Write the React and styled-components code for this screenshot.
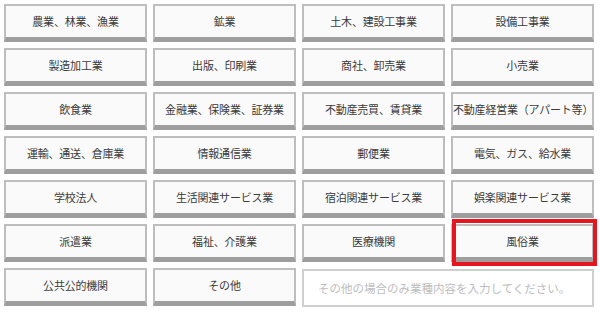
import React from 'react'
import styled, { createGlobalStyle } from 'styled-components'

const industries = [
    '農業、林業、漁業', '鉱業', '土木、建設工事業', '設備工事業',
    '製造加工業', '出版、印刷業', '商社、卸売業', '小売業',
    '飲食業', '金融業、保険業、証券業', '不動産売買、賃貸業', '不動産経営業（アパート等）',
    '運輸、通送、倉庫業', '情報通信業', '郵便業', '電気、ガス、給水業',
    '学校法人', '生活関連サービス業', '宿泊関連サービス業', '娯楽関連サービス業',
    '派遣業', '福祉、介護業', '医療機関', '風俗業',
    '公共公的機関', 'その他',
]

const GlobalStyle = createGlobalStyle`
    body {
        margin: 0;
        background: #ffffff;
        font-family: "Noto Sans CJK JP", "Noto Sans", sans-serif;
    }
`

function App() {
    const [selected, setSelected] = React.useState('風俗業')
    const [other, setOther] = React.useState('')

    return (
        <>
            <GlobalStyle />
            <Grid>
                {industries.map((name) => (
                    <Choice
                        key={name}
                        type="button"
                        $active={selected === name}
                        onClick={() => setSelected(name)}
                    >
                        {name}
                    </Choice>
                ))}
                <OtherInput
                    value={other}
                    onChange={(e) => setOther(e.target.value)}
                    placeholder="その他の場合のみ業種内容を入力してください。"
                />
            </Grid>
        </>
    )
}

export default App

const Grid = styled.div`
    display: grid;
    grid-template-columns: repeat(4, 143px);
    grid-auto-rows: 38px;
    gap: 6px;
    padding: 4px;
`
const Choice = styled.button`
    position: relative;
    box-sizing: border-box;
    margin: 0;
    padding: 0 0 1px;
    border: 2px solid #bebebe;
    border-bottom: 5px solid #9e9e9e;
    background: #fafafa;
    color: #3a3a3a;
    font-family: inherit;
    font-size: 11px;
    letter-spacing: -0.2px;
    white-space: nowrap;
    overflow: visible;
    cursor: pointer;
    &::after {
        content: '';
        display: ${(p) => (p.$active ? 'block' : 'none')};
        position: absolute;
        top: -7px;
        bottom: -9px;
        left: -1px;
        right: -5px;
        border: 4px solid #e6161f;
        pointer-events: none;
    }
`
const OtherInput = styled.input`
    grid-column: span 2;
    box-sizing: border-box;
    margin-top: 1px;
    height: 38px;
    border: 2px solid #cfcfcf;
    background: #ffffff;
    padding: 0 14px;
    font-family: inherit;
    font-size: 11.5px;
    color: #333;
    outline: none;
    &::placeholder {
        color: #bdbdbd;
    }
`
